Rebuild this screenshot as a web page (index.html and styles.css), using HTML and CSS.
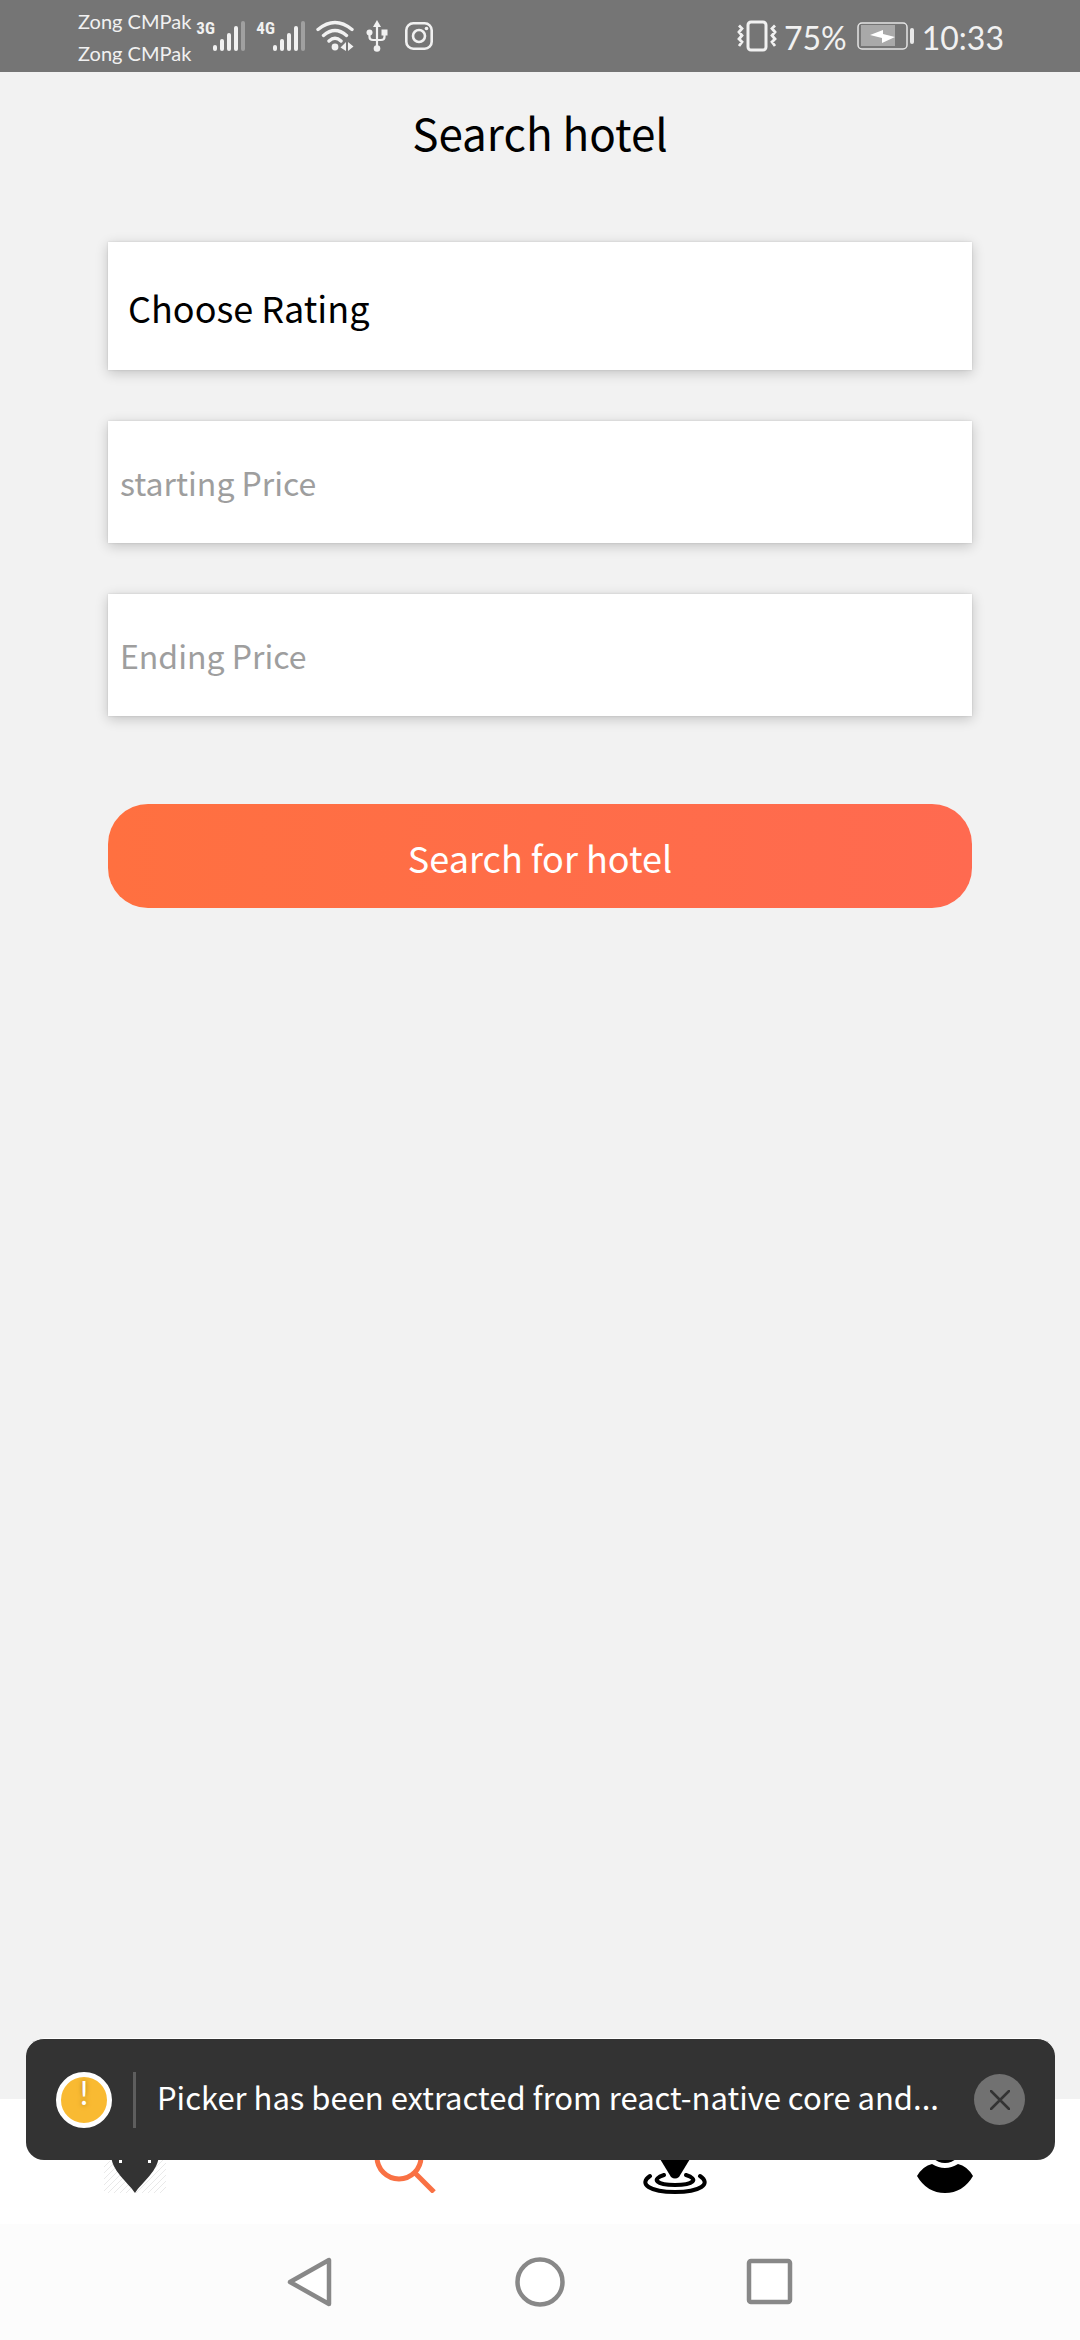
FILE: index.html
```html
<!DOCTYPE html>
<html lang="en">
<head>
<meta charset="utf-8">
<meta name="viewport" content="width=device-width, initial-scale=1">
<title>Search hotel</title>
<link rel="stylesheet" href="styles.css">
</head>
<body>
<div class="app">
  <header class="status">
    <div class="carriers"><span>Zong CMPak</span><span>Zong CMPak</span></div>
    <div class="signal">
      <span class="net">3G</span>
      <svg width="32" height="30" viewBox="0 0 32 30" fill="#f1f1f1"><rect y="24" width="4" height="6" rx="2"/><rect x="7" y="18" width="4" height="12" rx="2"/><rect x="14" y="12" width="4" height="18" rx="2"/><rect x="21" y="5" width="4" height="25" rx="2"/><rect x="28" width="4" height="30" rx="2" opacity=".35"/></svg>
    </div>
    <div class="signal">
      <span class="net">4G</span>
      <svg width="32" height="30" viewBox="0 0 32 30" fill="#f1f1f1"><rect y="24" width="4" height="6" rx="2"/><rect x="7" y="18" width="4" height="12" rx="2"/><rect x="14" y="12" width="4" height="18" rx="2"/><rect x="21" y="5" width="4" height="25" rx="2"/><rect x="28" width="4" height="30" rx="2" opacity=".35"/></svg>
    </div>
    <svg class="wifi" width="38" height="32" viewBox="0 0 38 32" fill="none" stroke="#f1f1f1" stroke-width="3.4" stroke-linecap="round"><path d="M2 9.500Q19-4.500 36 9.500M7.500 15.500Q19 5.500 30.500 15.500M13 21Q19 15.500 25 21"/><circle cx="19" cy="27" r="3.400" fill="#f1f1f1" stroke="none"/><path d="M24.500 27.500L30 22V31ZM32 22L37.500 26.500L32 31Z" fill="#f1f1f1" stroke="none"/></svg>
    <svg class="usb" width="22" height="32" viewBox="0 0 22 32" fill="#f1f1f1"><path d="M11 5V28M3.500 12V17Q3.500 20 7 20H15Q18.500 20 18.500 17V12" fill="none" stroke="#f1f1f1" stroke-width="2.200"/><path d="M11 0L15 7H7Z"/><circle cx="3.500" cy="12.500" r="3"/><rect x="15.500" y="9.500" width="6" height="6"/><circle cx="11" cy="28.500" r="3.300"/></svg>
    <svg class="insta" width="28" height="28" viewBox="0 0 28 28" fill="none" stroke="#f1f1f1" stroke-width="2.600"><rect x="1.300" y="1.300" width="25.400" height="25.400" rx="7"/><circle cx="14" cy="14" r="6"/><circle cx="21.500" cy="6.500" r="1.800" fill="#f1f1f1" stroke="none"/></svg>
    <div class="right">
      <svg width="40" height="32" viewBox="0 0 40 32" fill="none" stroke="#f1f1f1" stroke-width="3"><rect x="11" y="2" width="18" height="28" rx="3"/><path d="M2 5.500L5 8.500L2 12L5 15.500L2 19L5 22L2 26M38 5.500L35 8.500L38 12L35 15.500L38 19L35 22L38 26" stroke-width="2.800"/></svg>
      <span>75%</span>
      <svg class="battery" width="58" height="28" viewBox="0 0 58 28"><rect x="1" y="1" width="49" height="26" rx="4" fill="none" stroke="#e4e4e4" stroke-width="1.500"/><rect x="4" y="3" width="34" height="21" fill="#a9a9a9"/><path d="M13 13L26 8V12L38 15L25 21V16Z" fill="#fff"/><rect x="53" y="6" width="4" height="16" rx="2" fill="#e8e8e8"/></svg>
      <time>10:33</time>
    </div>
  </header>

  <main class="content">
    <h1>Search hotel</h1>
    <form class="form">
      <select class="field picker" aria-label="Rating"><option>Choose Rating</option></select>
      <input class="field" type="text" placeholder="starting Price" aria-label="Starting price">
      <input class="field" type="text" placeholder="Ending Price" aria-label="Ending price">
      <button class="submit" type="button">Search for hotel</button>
    </form>
  </main>

  <nav class="tabs">
    <a href="#" aria-label="Hotels"><svg width="62" height="62" viewBox="0 0 62 62"><path d="M0 36L6 30M0 42L12 30M0 48L17 31M0 54L18 36M0 60L20 40M4 62L23 43M10 62L26 46M16 62L29 49M22 62L30 54M32 62L62 32M38 62L62 38M44 62L62 44M50 62L62 50M56 62L62 56M38 50L60 28" stroke="#e9e9e9" stroke-width="1"/><path d="M31 62C24 51 7 40 7 23A24 23 0 0 1 55 23C55 40 38 51 31 62Z" fill="#333"/><path d="M15 29h3v3h-3zM44 29h3v3h-3z" fill="#fff"/></svg></a>
    <a href="#" aria-label="Search"><svg width="62" height="62" viewBox="0 0 62 62" fill="none" stroke="#f97144" stroke-width="5"><circle cx="25" cy="26" r="22"/><path d="M41 42L60 61"/></svg></a>
    <a href="#" aria-label="Map"><svg width="64" height="64" viewBox="0 0 64 64" fill="none" stroke="#000" stroke-width="4" stroke-linecap="round"><path d="M28 47L14 24A20 20 0 1 1 50 24L36 47Q32 50 28 47Z" fill="#000" stroke="none"/><path d="M21 45C8 49 13 55 32 55S56 49 43 45M7 46C-5 54 7 62 32 62S69 54 57 46"/></svg></a>
    <a href="#" aria-label="Profile"><svg width="62" height="64" viewBox="0 0 62 64"><circle cx="31" cy="16" r="17"/><path d="M3 46Q9 36 18 34Q31 42 44 34Q53 36 59 46Q49 63 31 63T3 46Z"/></svg></a>
  </nav>

  <footer class="system">
    <button type="button" aria-label="Back"><svg width="50" height="54" viewBox="0 0 50 54"><path d="M44 5V49L5 27Z" fill="#fff" stroke="#888" stroke-width="4.500" stroke-linejoin="round"/></svg></button>
    <button type="button" aria-label="Home"><svg width="50" height="54" viewBox="0 0 50 54"><circle cx="25" cy="27" r="22.500" fill="#fff" stroke="#888" stroke-width="4.500"/></svg></button>
    <button type="button" aria-label="Recent apps"><svg width="50" height="54" viewBox="0 0 50 54"><rect x="4" y="6" width="41" height="41" rx="2" fill="#fff" stroke="#888" stroke-width="4.500"/></svg></button>
  </footer>

  <aside class="toast">
    <span class="alert"><span>!</span></span>
    <p>Picker has been extracted from react-native core and...</p>
    <button type="button" class="close" aria-label="Dismiss"><svg width="20" height="20" viewBox="0 0 20 20"><path d="M1 1L19 19M19 1L1 19" stroke="#333" stroke-width="2.500" stroke-linecap="round"/></svg></button>
  </aside>
</div>
</body>
</html>
```
FILE: styles.css
```css
* { box-sizing: border-box; }

body {
  margin: 0;
  background: #f2f2f2;
  font-family: "Noto Sans CJK SC", "Noto Sans", sans-serif;
  color: #000;
}

.app {
  position: relative;
  display: flex;
  flex-direction: column;
  min-height: 100vh;
}

svg { display: block; flex: none; }

button { border: 0; padding: 0; background: none; font: inherit; }

.status {
  display: flex;
  align-items: center;
  height: 72px;
  padding: 0 76px 0 78px;
  background: #757575;
  color: #f1f1f1;
  font-family: Lato, sans-serif;
}

.carriers {
  display: flex;
  flex-direction: column;
  padding-top: 2px;
  font-size: 20px;
  line-height: 32px;
  margin-right: 5px;
}

.signal { display: flex; align-items: flex-start; width: 60px; }

.net {
  width: 17px;
  font: bold 17px/14px "Liberation Sans Narrow", "Roboto Condensed", Roboto, sans-serif;
}

.usb { margin-left: 12px; }

.insta { margin-left: 17px; }

.right {
  display: flex;
  align-items: center;
  margin-left: auto;
  font-size: 32px;
  line-height: 40px;
}

.right span { margin: 0 10px 0 7px; }

.right span, .right time { padding-top: 3px; }

.right time { margin-left: 7px; }

.content { flex: 1; padding: 28px 10% 0; }

h1 {
  margin: 0 0 78px;
  font-size: 44px;
  line-height: 64px;
  font-weight: 400;
  text-align: center;
}

.form { display: flex; flex-direction: column; gap: 51px; }

.field {
  width: 100%;
  height: 122px;
  border: 0;
  border-radius: 0;
  padding: 0 12px;
  background: #fff;
  box-shadow: 0 3px 12px rgba(0, 0, 0, .2), 0 0 2px rgba(0, 0, 0, .12);
  font-family: inherit;
  font-size: 32px;
  color: #000;
  appearance: none;
}

.field::placeholder { color: #9e9e9e; opacity: 1; }

.picker { height: 128px; padding: 2px 20px 0; font-size: 36px; }

.submit {
  height: 104px;
  margin-top: 37px;
  padding-top: 2px;
  border-radius: 40px;
  background: linear-gradient(90deg, #ff7040, #ff6a50);
  color: #fff;
  font-size: 36px;
}

.tabs {
  display: grid;
  grid-template-columns: repeat(4, 1fr);
  height: 125px;
  background: #fff;
}

.tabs a { display: flex; justify-content: center; align-items: center; }

.system {
  display: flex;
  justify-content: center;
  align-items: center;
  gap: 180px;
  height: 116px;
  background: #fcfcfc;
}

.toast {
  position: absolute;
  left: 26px;
  right: 25px;
  bottom: 180px;
  height: 122px;
  display: flex;
  align-items: center;
  padding: 0 30px;
  border-radius: 18px;
  border-top: 1px solid #fff;
  background: #333;
  color: #fff;
}

.alert {
  flex: none;
  width: 56px;
  height: 56px;
  border: 5px solid #fff;
  border-radius: 50%;
  background: #f9ba32;
  text-align: center;
  font: 32px/32px Lato, sans-serif;
  text-shadow: 0 0 5px #a77b1e;
}

.toast p {
  flex: 1;
  min-width: 0;
  height: 56px;
  margin: 0 0 0 21px;
  padding-left: 21px;
  border-left: 3px solid #5e5e5e;
  font-size: 31px;
  line-height: 50px;
  white-space: nowrap;
}

.close {
  flex: none;
  display: grid;
  place-items: center;
  width: 51px;
  height: 51px;
  border-radius: 50%;
  background: #717171;
}
```
